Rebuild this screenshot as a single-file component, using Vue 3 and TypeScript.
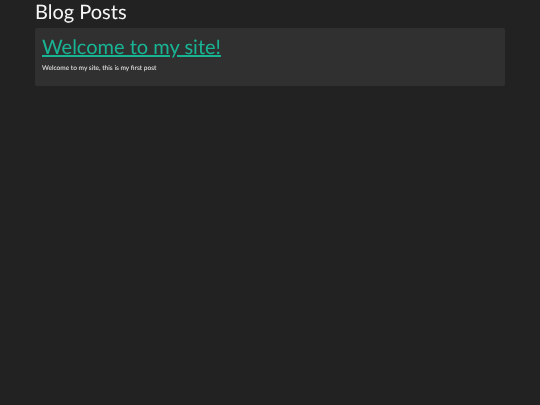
<script setup lang="ts">
const title: string = 'Blog Posts'
</script>

<template>
  <div class="page">
    <h2 class="heading">{{ title }}</h2>
    <div class="well">
      <h1 class="post"><a href="#">Welcome to my site!</a></h1>
      <p class="text">Welcome to my site, this is my first post</p>
    </div>
  </div>
</template>

<style scoped>
.page {
  box-sizing: border-box;
  min-height: 405px;
  padding: 0 35px;
  background: #222222;
  font-family: Lato, sans-serif;
  color: #fff;
  text-rendering: geometricPrecision;
}
.heading {
  margin: 0 0 4px;
  padding-top: 1px;
  font-size: 20px;
  font-weight: 400;
  line-height: 23px;
  will-change: transform;
  color: #f6f6f6;
}
.well {
  box-sizing: border-box;
  height: 58px;
  padding: 7px;
  background: #303030;
  border-radius: 2px;
}
.post {
  margin: 0 0 5px;
  font-size: 20px;
  font-weight: 400;
  line-height: 24px;
  will-change: transform;
}
.post a {
  color: #18b595;
  text-decoration: underline;
}
.text {
  margin: 0;
  font-size: 6.58px;
  line-height: 10px;
  color: #f0f0f0;
  will-change: transform;
}
</style>
<style>
html, body { margin: 0; background: #222222; }
</style>
